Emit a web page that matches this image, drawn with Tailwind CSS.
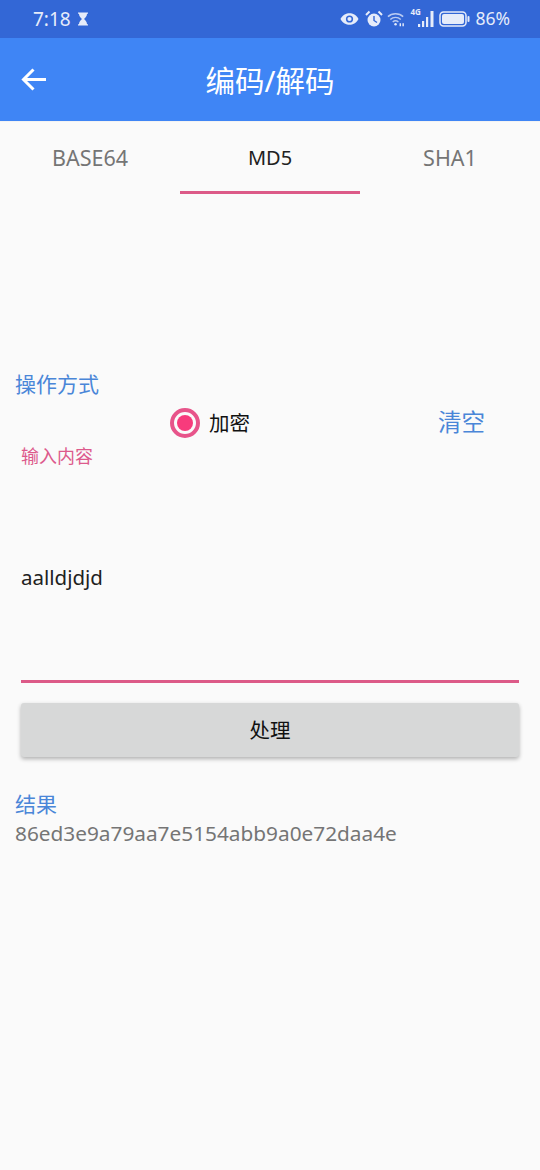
<!DOCTYPE html>
<html><head><meta charset="utf-8"><script src="https://cdn.jsdelivr.net/npm/@tailwindcss/browser@4"></script></head>
<body class="m-0">
<div class="w-[540px] h-[1170px] bg-[#fafafa] flex flex-col overflow-hidden font-['Noto_Sans','Noto_Sans_CJK_SC',sans-serif]">
  <div class="h-[38px] bg-[#3367d6] flex items-center justify-between pl-[33px] pr-[30px] text-[#e6ecfa] shrink-0">
    <div class="flex items-center gap-[6px]">
      <span class="text-[19px] leading-none">7:18</span>
      <svg width="12" height="14" viewBox="0 0 12 14" fill="#e6ecfa"><path d="M1 0.500h10v1.300h-1c0 2.500-1.600 3.800-3 5.200 1.400 1.400 3 2.700 3 5.200h1v1.300H1v-1.300h1c0-2.500 1.600-3.800 3-5.200C3.600 5.600 2 4.300 2 1.800H1z"/></svg>
    </div>
    <div class="flex items-center">
      <svg width="19" height="14" viewBox="0 0 20 14" class="mr-[6px]"><path d="M0.500 7C3 2.500 6.500 1 10 1s7 1.500 9.500 6C17 11.500 13.500 13 10 13S3 11.500 0.500 7z" fill="#e6ecfa"/><circle cx="10" cy="7" r="3.800" fill="#3367d6"/><circle cx="10" cy="7" r="2.200" fill="#e6ecfa"/></svg>
      <svg width="18" height="18" viewBox="0 0 18 18" class="mr-[4px]"><circle cx="9" cy="10" r="6.500" fill="#e6ecfa"/><path d="M9 6v4.500l3 2" stroke="#3367d6" stroke-width="1.400" fill="none"/><path d="M1 5l3.500-3.500M17 5l-3.500-3.500" stroke="#e6ecfa" stroke-width="2"/></svg>
      <svg width="19" height="16" viewBox="0 0 20 16" fill="none" stroke="#b9cbf2" stroke-width="1.500" class="mr-[4px]"><path d="M1 5.500C5 1.500 13 1.500 17 5.500M3.500 8.500C6.500 5.500 11.500 5.500 14.500 8.500M6 11.200C8 9.500 10 9.500 12 11.200"/><circle cx="9" cy="13.500" r="1.300" fill="#e6ecfa" stroke="none"/><path d="M14 12.500v3M17 12.500v3" stroke="#e6ecfa"/></svg>
      <div class="relative w-[25px] h-[18px] mr-[4px]">
        <span class="absolute left-0 top-[-2px] text-[8px] font-bold leading-none">4G</span>
        <svg width="25" height="18" viewBox="0 0 25 18" fill="#e6ecfa" class="absolute left-0 top-0"><rect x="8" y="14" width="2.200" height="3"/><rect x="12" y="11" width="2.200" height="6"/><rect x="16" y="7" width="2.200" height="10"/><rect x="20.500" y="1" width="3" height="16"/></svg>
      </div>
      <svg width="31" height="16" viewBox="0 0 31 16" class="mr-[5px]"><rect x="1" y="1" width="26" height="14" rx="3.500" fill="none" stroke="#e6ecfa" stroke-width="1.500"/><rect x="3" y="3" width="22" height="10" rx="2" fill="#e6ecfa"/><rect x="28.500" y="5" width="2" height="6" rx="1" fill="#e6ecfa"/></svg>
      <span class="text-[17.500px] leading-none">86%</span>
    </div>
  </div>
  <div class="h-[83px] bg-[#3f85f5] flex items-center relative shrink-0">
    <svg width="26" height="24" viewBox="0 0 26 24" fill="none" stroke="#fff" stroke-width="3" class="ml-[21px] mb-[2px]"><path d="M25 12.500H3M12.500 2.500L2.500 12.500l10 10"/></svg>
    <div class="absolute inset-x-0 top-[24px] text-center text-white text-[29.500px] leading-[38px]">编码/解码</div>
  </div>
  <div class="h-[73px] flex shrink-0 border-t border-[#f3f3f3]">
    <div class="w-[180px] flex justify-center pt-[22px] text-[#757575] text-[21.500px] leading-[28px]">BASE64</div>
    <div class="w-[180px] flex justify-center pt-[22px] text-[#212121] text-[20px] leading-[28px] border-b-[3px] border-[#dc5a88]">MD5</div>
    <div class="w-[180px] flex justify-center pt-[22px] text-[#757575] text-[21.500px] leading-[28px]">SHA1</div>
  </div>
  <div class="pl-[15px] mt-[176px] text-[#4a86d8] text-[21px] leading-[28px]">操作方式</div>
  <div class="flex items-center h-[46px] mt-[2px] relative">
    <div class="ml-[170px] w-[30px] h-[30px] rounded-full border-[4px] border-[#e7548a] flex items-center justify-center"><div class="w-[16px] h-[16px] rounded-full bg-[#f73b7c]"></div></div>
    <span class="ml-[9px] text-[20.500px] text-[#111]">加密</span>
    <span class="ml-auto mr-[55px] text-[23.500px] text-[#4a86d8]">清空</span>
  </div>
  <div class="pl-[21px] mt-[-2px] text-[#dd5a8c] text-[18px] leading-[24px]">输入内容</div>
  <div class="mx-[21px] h-[216px] mt-[-1px] border-b-[3px] border-[#dc5a88] pt-[96px] text-[20.500px] leading-[28px] text-[#212121]">aalldjdjd</div>
  <div class="mx-[21px] mt-[20px] h-[54px] rounded-[3px] bg-[#d7d8d8] shadow-[0_2px_4px_rgba(0,0,0,0.3)] flex items-center justify-center text-[20.500px] text-[#111]">处理</div>
  <div class="pl-[15px] mt-[33px] text-[#4a86d8] text-[21px] leading-[28px]">结果</div>
  <div class="pl-[15px] text-[#757575] text-[20.800px] leading-[30px]">86ed3e9a79aa7e5154abb9a0e72daa4e</div>
</div>
</body></html>
